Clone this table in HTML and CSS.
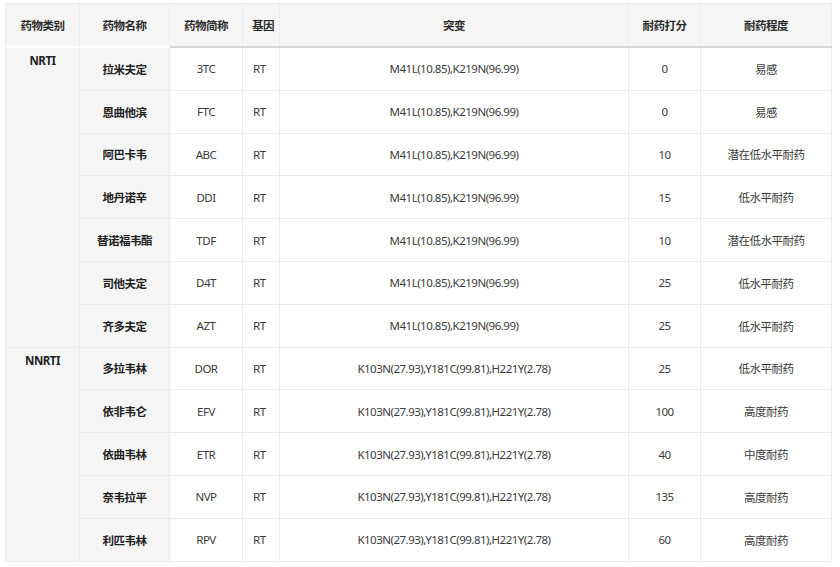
FILE: index.html
```html
<!DOCTYPE html>
<html lang="zh">
<head>
<meta charset="utf-8">
<link rel="stylesheet" href="styles.css">
</head>
<body>
<table class="grid">
  <colgroup>
    <col class="c1"><col class="c2"><col class="c3"><col class="c4"><col class="c5"><col class="c6"><col class="c7">
  </colgroup>
  <thead>
    <tr>
      <th class="grp">药物类别</th>
      <th class="grp">药物名称</th>
      <th>药物简称</th>
      <th class="left">基因</th>
      <th>突变</th>
      <th>耐药打分</th>
      <th>耐药程度</th>
    </tr>
  </thead>
  <tbody>
    <tr><td class="cat" rowspan="7">NRTI</td><td class="name">拉米夫定</td><td>3TC</td><td class="left">RT</td><td>M41L(10.85),K219N(96.99)</td><td>0</td><td>易感</td></tr>
    <tr><td class="name">恩曲他滨</td><td>FTC</td><td class="left">RT</td><td>M41L(10.85),K219N(96.99)</td><td>0</td><td>易感</td></tr>
    <tr><td class="name">阿巴卡韦</td><td>ABC</td><td class="left">RT</td><td>M41L(10.85),K219N(96.99)</td><td>10</td><td>潜在低水平耐药</td></tr>
    <tr><td class="name">地丹诺辛</td><td>DDI</td><td class="left">RT</td><td>M41L(10.85),K219N(96.99)</td><td>15</td><td>低水平耐药</td></tr>
    <tr><td class="name">替诺福韦酯</td><td>TDF</td><td class="left">RT</td><td>M41L(10.85),K219N(96.99)</td><td>10</td><td>潜在低水平耐药</td></tr>
    <tr><td class="name">司他夫定</td><td>D4T</td><td class="left">RT</td><td>M41L(10.85),K219N(96.99)</td><td>25</td><td>低水平耐药</td></tr>
    <tr><td class="name">齐多夫定</td><td>AZT</td><td class="left">RT</td><td>M41L(10.85),K219N(96.99)</td><td>25</td><td>低水平耐药</td></tr>
    <tr><td class="cat" rowspan="5">NNRTI</td><td class="name">多拉韦林</td><td>DOR</td><td class="left">RT</td><td>K103N(27.93),Y181C(99.81),H221Y(2.78)</td><td>25</td><td>低水平耐药</td></tr>
    <tr><td class="name">依非韦仑</td><td>EFV</td><td class="left">RT</td><td>K103N(27.93),Y181C(99.81),H221Y(2.78)</td><td>100</td><td>高度耐药</td></tr>
    <tr><td class="name">依曲韦林</td><td>ETR</td><td class="left">RT</td><td>K103N(27.93),Y181C(99.81),H221Y(2.78)</td><td>40</td><td>中度耐药</td></tr>
    <tr><td class="name">奈韦拉平</td><td>NVP</td><td class="left">RT</td><td>K103N(27.93),Y181C(99.81),H221Y(2.78)</td><td>135</td><td>高度耐药</td></tr>
    <tr><td class="name">利匹韦林</td><td>RPV</td><td class="left">RT</td><td>K103N(27.93),Y181C(99.81),H221Y(2.78)</td><td>60</td><td>高度耐药</td></tr>
  </tbody>
</table>
</body>
</html>
```

FILE: styles.css
```css
html, body {
  margin: 0;
  background: #ffffff;
}
body {
  padding: 3px 0 0 5px;
  font-family: "Noto Sans", "Noto Sans CJK SC", sans-serif;
  font-size: 11.5px;
  letter-spacing: -0.5px;
  color: #3c3c3c;
}
.grid {
  border-collapse: collapse;
  table-layout: fixed;
  width: 826px;
}
.c1 { width: 74px; }
.c2 { width: 90px; }
.c3 { width: 73px; }
.c4 { width: 37px; }
.c5 { width: 349px; }
.c6 { width: 72px; }
.c7 { width: 131px; }

th, td {
  border: 1px solid #ececec;
  text-align: center;
  padding: 0 8px;
  white-space: nowrap;
}
th {
  height: 42px;
  background: #f5f5f5;
  color: #2b2b2b;
  font-weight: bold;
  border-bottom: 2px solid #d6d6d6;
}
th.grp {
  border-bottom: 2px solid #ffffff;
}
td {
  height: 41.8px;
  background: #ffffff;
}
.left { text-align: left; }
td.left { padding-left: 10px; }
th.left { padding-left: 9px; }
.cat {
  vertical-align: top;
  padding-top: 5px;
  background: #f5f5f5;
  font-weight: bold;
  color: #222;
}
.name {
  background: #f5f5f5;
  font-weight: bold;
  color: #222;
}
```
